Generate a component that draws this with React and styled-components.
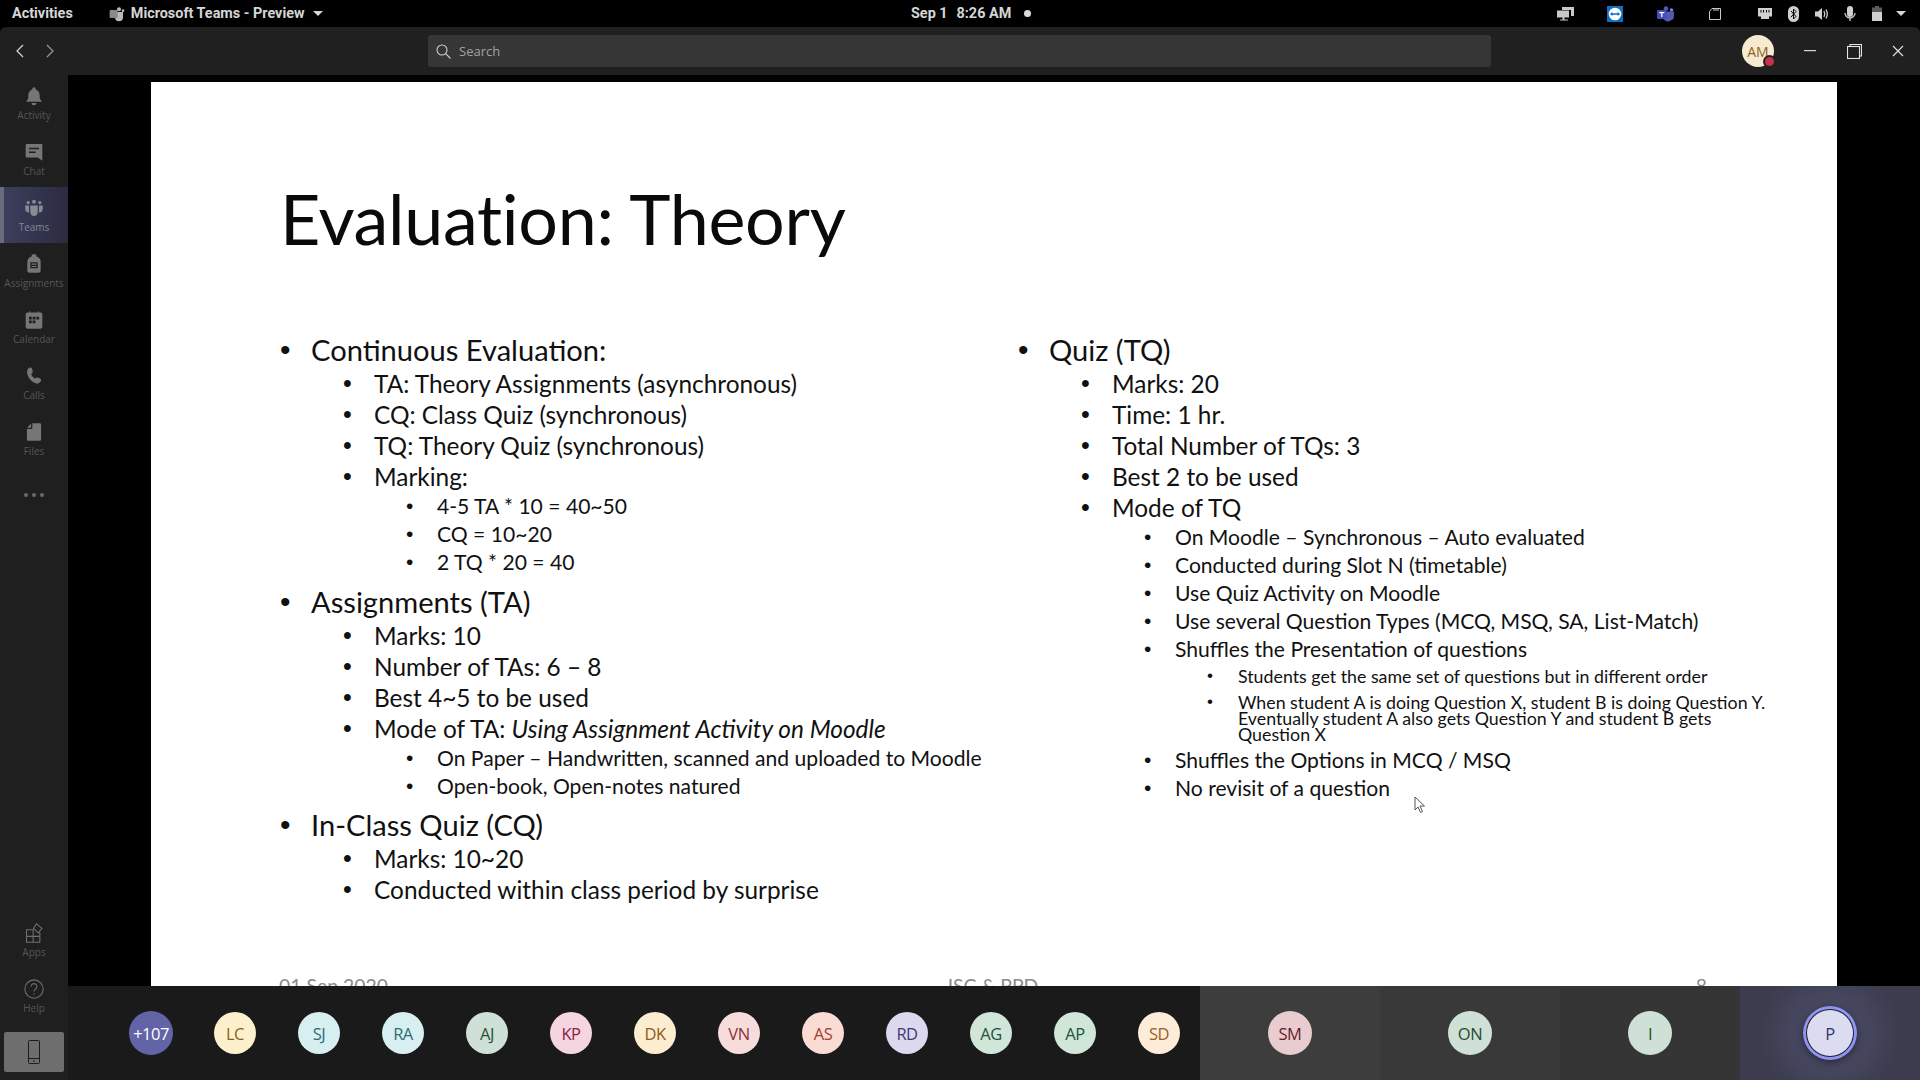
import React from "react";
import styled, { createGlobalStyle } from "styled-components";

const GlobalStyle = createGlobalStyle`
  html, body { margin: 0; padding: 0; background: #000; }
  * { box-sizing: border-box; }
`;

const Page = styled.div`
  width: 1920px;
  height: 1080px;
  display: flex;
  flex-direction: column;
  overflow: hidden;
  background: #000;
`;

// gnome top bar
const TopBar = styled.div`
  height: 27px;
  flex: none;
  display: grid;
  grid-template-columns: 911px auto 1fr;
  align-items: center;
  background: #000;
  color: #d6d6d6;
  font: 700 14.4px "Roboto", sans-serif;
`;

const TopLeft = styled.div`
  display: flex;
  align-items: center;
  padding-left: 12px;
`;

const AppName = styled.div`
  display: flex;
  align-items: center;
  gap: 6px;
  margin-left: 36px;
`;

const Caret = styled.span`
  width: 0;
  height: 0;
  margin-left: 2px;
  border-left: 5px solid transparent;
  border-right: 5px solid transparent;
  border-top: 5px solid #d6d6d6;
`;

const Clock = styled.div`
  display: flex;
  align-items: center;
  gap: 9px;
`;

const RecDot = styled.span`
  width: 7px;
  height: 7px;
  margin-left: 4px;
  border-radius: 50%;
  background: #dcdcdc;
`;

const Tray = styled.div`
  height: 27px;
  display: flex;
  align-items: center;
  justify-content: flex-end;
  padding-right: 10px;
`;

const TraySlot = styled.span`
  width: ${(p) => p.$w}px;
  display: flex;
  justify-content: center;
`;

// teams title bar
const TitleBar = styled.div`
  height: 48px;
  flex: none;
  display: grid;
  grid-template-columns: 428px 1063px 1fr;
  align-items: center;
  background: #202020;
  border-radius: 6px 6px 0 0;
`;

const NavArrows = styled.div`
  display: flex;
  align-items: center;
  gap: 18px;
  padding-left: 14px;
`;

const SearchBox = styled.div`
  height: 32px;
  display: flex;
  align-items: center;
  gap: 8px;
  padding-left: 8px;
  background: #363636;
  border-radius: 3px;
  color: #a2a2a2;
  font: 13px "Open Sans", sans-serif;
`;

const TitleRight = styled.div`
  display: flex;
  align-items: center;
  padding-left: 251px;
`;

const MeAvatar = styled.div`
  position: relative;
  width: 32px;
  height: 32px;
  display: flex;
  align-items: center;
  justify-content: center;
  border-radius: 50%;
  background: #f6ead0;
  color: #8a6420;
  font: 14px "Open Sans", sans-serif;
`;

const Presence = styled.span`
  position: absolute;
  right: -2px;
  bottom: -1px;
  width: 13px;
  height: 13px;
  border-radius: 50%;
  border: 2px solid #202020;
  background: #c4314b;
`;

const WinButtons = styled.div`
  display: flex;
  align-items: center;
  margin-left: 14px;
`;

const WinButton = styled.span`
  width: 44px;
  display: flex;
  justify-content: center;
`;

const Body = styled.div`
  flex: 1;
  min-height: 0;
  display: flex;
`;

const Sidebar = styled.nav`
  width: 68px;
  flex: none;
  display: flex;
  flex-direction: column;
  background: #1f1f1f;
`;

const NavItem = styled.div`
  height: 56px;
  flex: none;
  display: flex;
  flex-direction: column;
  align-items: center;
  padding-top: 11px;
  gap: 2px;
  color: #767676;
  border-left: 4px solid ${(p) => (p.$active ? "#6b6b80" : "transparent")};
  padding-right: 4px;
  background: ${(p) => (p.$active ? "linear-gradient(90deg, #3c3e5c, #2b2c40)" : "none")};
`;

const NavLabel = styled.span`
  font: 10px/14px "Open Sans", sans-serif;
  color: ${(p) => (p.$active ? "#86868f" : "#565656")};
  white-space: nowrap;
`;

const MoreDots = styled.div`
  height: 56px;
  flex: none;
  display: flex;
  align-items: center;
  justify-content: center;
  gap: 4px;
`;

const Dot = styled.span`
  width: 4px;
  height: 4px;
  border-radius: 50%;
  background: #6a6a6a;
`;

const SidebarBottom = styled.div`
  margin-top: auto;
  display: flex;
  flex-direction: column;
  padding-bottom: 8px;
`;

const PhoneButton = styled.div`
  height: 40px;
  margin: 8px 4px 0;
  display: flex;
  align-items: center;
  justify-content: center;
  border-radius: 2px;
  background: #6e6e6e;
`;

const MainColumn = styled.div`
  flex: 1;
  min-width: 0;
  display: flex;
  flex-direction: column;
`;

const Stage = styled.div`
  flex: 1;
  min-height: 0;
  overflow: hidden;
  background: #000;
  padding: 7px 83px 0;
`;

const Slide = styled.section`
  position: relative;
  height: 948px;
  display: flex;
  flex-direction: column;
  padding: 96px 40px 0 129px;
  background: #fff;
  color: #111;
  font-family: "Lato", sans-serif;
`;

const SlideTitle = styled.h1`
  margin: 0 0 74px;
  font-size: 70px;
  font-weight: 400;
  line-height: 80px;
  letter-spacing: -0.3px;
  color: #0a0a0a;
`;

const Columns = styled.div`
  display: grid;
  grid-template-columns: 738px 1fr;
`;

const levelSpec = {
  1: { size: 29.1, line: 36, indent: 0, dot: 30 },
  2: { size: 24.4, line: 31, indent: 63, dot: 25 },
  3: { size: 21.1, line: 28, indent: 126, dot: 21 },
  4: { size: 17.8, line: 16, indent: 189, dot: 17 },
};

const Item = styled.div`
  display: grid;
  grid-template-columns: 31px 1fr;
  padding-left: ${(p) => levelSpec[p.$level].indent}px;
  font-size: ${(p) => levelSpec[p.$level].size}px;
  line-height: ${(p) => levelSpec[p.$level].line}px;
  padding-top: ${(p) => (p.$level === 4 ? 5 : 0)}px;
  padding-bottom: ${(p) => (p.$level === 4 ? 4.5 : 0)}px;
  margin-top: ${(p) => (p.$gap ? 7.5 : 0)}px;
  white-space: pre-line;
`;

const Bullet = styled.span`
  font-family: "Liberation Sans", sans-serif;
  font-size: ${(p) => levelSpec[p.$level].dot}px;
`;

const SlideFooter = styled.div`
  position: absolute;
  left: 128px;
  right: 130px;
  top: 892px;
  display: grid;
  grid-template-columns: 1fr auto 1fr;
  color: #8a8a8a;
  font-size: 19.4px;
`;

const FooterNumber = styled.span`
  text-align: right;
`;

const CursorMark = styled.svg`
  position: absolute;
  left: 1263px;
  top: 714px;
`;

const BottomBar = styled.div`
  height: 94px;
  flex: none;
  display: flex;
  background: #1a1a1a;
`;

const Gallery = styled.div`
  flex: 1;
  min-width: 0;
  display: flex;
  align-items: center;
  padding-left: 41px;
`;

const GallerySlot = styled.div`
  width: 84px;
  flex: none;
  display: flex;
  justify-content: center;
`;

const Tile = styled.div`
  width: 180px;
  flex: none;
  display: flex;
  align-items: center;
  justify-content: center;
  background: ${(p) => p.$bg};
`;

const SelfTile = styled(Tile)`
  background: radial-gradient(circle at 50% 50%, #555679 0, #46465f 35%, #3c3c4e 70%);
`;

const Avatar = styled.div`
  width: ${(p) => p.$size}px;
  height: ${(p) => p.$size}px;
  display: flex;
  align-items: center;
  justify-content: center;
  border-radius: 50%;
  background: ${(p) => p.$bg};
  color: ${(p) => p.$fg};
  font: 500 16.5px "Open Sans", sans-serif;
  letter-spacing: -0.5px;
`;

const SpeakerRing = styled.div`
  width: 54px;
  height: 54px;
  display: flex;
  align-items: center;
  justify-content: center;
  border-radius: 50%;
  background: #1d1d2c;
  box-shadow: inset 0 0 0 3px #8f93f2, 0 2px 8px rgba(0, 0, 0, 0.5);
`;

const Icon = ({ children, size = 20, color = "#767676", box = 24 }) => (
  <svg width={size} height={size} viewBox={`0 0 ${box} ${box}`} fill={color}>
    {children}
  </svg>
);

const navItems = [
  {
    label: "Activity",
    icon: (
      <Icon>
        <path d="M12 1.5a2 2 0 0 1 2 2v.6c3 1 4.8 3.6 4.8 7v3.6l2.7 4.3h-19l2.7-4.3v-3.6c0-3.4 1.8-6 4.8-7v-.6a2 2 0 0 1 2-2zM9 20.500h6a3 2.700 0 0 1-6 0z" />
      </Icon>
    ),
  },
  {
    label: "Chat",
    icon: (
      <Icon>
        <path d="M3 2.500h18a1 1 0 0 1 1 1v19l-5.500-4H3a1 1 0 0 1-1-1v-14a1 1 0 0 1 1-1z" />
        <path d="M6 7h12v1.800H6zM6 11.500h8v1.800H6z" fill="#1f1f1f" />
      </Icon>
    ),
  },
  {
    label: "Teams",
    active: true,
    icon: (
      <Icon color="#8a8a96">
        <circle cx="12" cy="4.500" r="2.300" />
        <circle cx="5" cy="5.500" r="1.900" />
        <circle cx="19" cy="5.500" r="1.900" />
        <path d="M7.500 9h9v7.500a4.500 5 0 0 1-9 0zM1.500 9h4.500v6.500q0 1.200.3 2C3 17.500 1.500 15.500 1.500 13zM18 9h4.500v4c0 2.500-1.500 4.500-4.800 4.500q.3-.8.3-2z" />
      </Icon>
    ),
  },
  {
    label: "Assignments",
    icon: (
      <Icon>
        <path d="M9 3a3 3 0 0 1 6 0c3 .8 5 3.200 5 6.500V20a2.500 2.500 0 0 1-2.500 2.500h-11A2.500 2.500 0 0 1 4 20V9.500C4 6.200 6 3.800 9 3z" />
        <path d="M7.500 10h9v7h-9zM9 11.500v1.500h6v-1.500zM9 14.300v1.300h6v-1.300z" fill="#1f1f1f" fillRule="evenodd" />
      </Icon>
    ),
  },
  {
    label: "Calendar",
    icon: (
      <Icon>
        <path d="M5 3h1.500V1.500h1V3h9V1.500h1V3H20a2 2 0 0 1 2 2v15a2.500 2.500 0 0 1-2.500 2.500h-15A2.500 2.500 0 0 1 2 20V5a2 2 0 0 1 2-2z" />
        <path d="M6 8h3.300v3.300H6zM10.400 8h3.300v3.300h-3.300zM14.800 8h3.300v3.300h-3.300zM6 12.600h3.300v3.300H6zM10.400 12.600h3.300v3.300h-3.300z" fill="#1f1f1f" />
      </Icon>
    ),
  },
  {
    label: "Calls",
    icon: (
      <Icon>
        <path d="M6.500 2c1.800-.6 3 .2 3.400 2l.5 2.300c.3 1.300-.2 2.200-1.300 3-.4.3-.4.7-.2 1.200.8 1.800 2 3.200 3.700 4.200.5.300.9.200 1.200-.1 1-1 2.100-1.200 3.300-.6l2 1c1.500.8 1.800 2.200.8 3.700-1.400 2.200-3.600 3-6 2-5-2-8.800-6.300-10-11.800C3 6 4 3.300 6.500 2z" />
      </Icon>
    ),
  },
  {
    label: "Files",
    icon: (
      <Icon>
        <path d="M10 1.500h9a1.500 1.500 0 0 1 1.500 1.500v18a1.500 1.500 0 0 1-1.500 1.500H5A1.500 1.500 0 0 1 3.500 21V8.500H9a1 1 0 0 0 1-1z" />
        <path d="M8.500 1.800v5.200H3.800z" />
      </Icon>
    ),
  },
];

const Outline = ({ children }) => (
  <svg width="20" height="20" viewBox="0 0 24 24" fill="none" stroke="#6f6f6f" strokeWidth="1.300">
    {children}
  </svg>
);

const leftColumn = [
  [1, "Continuous Evaluation:"],
  [2, "TA: Theory Assignments (asynchronous)"],
  [2, "CQ: Class Quiz (synchronous)"],
  [2, "TQ: Theory Quiz (synchronous)"],
  [2, "Marking:"],
  [3, "4-5 TA * 10 = 40~50"],
  [3, "CQ = 10~20"],
  [3, "2 TQ * 20 = 40"],
  [1, "Assignments (TA)", true],
  [2, "Marks: 10"],
  [2, "Number of TAs: 6 – 8"],
  [2, "Best 4~5 to be used"],
  [2, <>Mode of TA: <i>Using Assignment Activity on Moodle</i></>],
  [3, "On Paper – Handwritten, scanned and uploaded to Moodle"],
  [3, "Open-book, Open-notes natured"],
  [1, "In-Class Quiz (CQ)", true],
  [2, "Marks: 10~20"],
  [2, "Conducted within class period by surprise"],
];

const rightColumn = [
  [1, "Quiz (TQ)"],
  [2, "Marks: 20"],
  [2, "Time: 1 hr."],
  [2, "Total Number of TQs: 3"],
  [2, "Best 2 to be used"],
  [2, "Mode of TQ"],
  [3, "On Moodle – Synchronous – Auto evaluated"],
  [3, "Conducted during Slot N (timetable)"],
  [3, "Use Quiz Activity on Moodle"],
  [3, "Use several Question Types (MCQ, MSQ, SA, List-Match)"],
  [3, "Shuffles the Presentation of questions"],
  [4, "Students get the same set of questions but in different order"],
  [4, "When student A is doing Question X, student B is doing Question Y.\nEventually student A also gets Question Y and student B gets\nQuestion X"],
  [3, "Shuffles the Options in MCQ / MSQ"],
  [3, "No revisit of a question"],
];

const people = [
  ["LC", "#fdf0cd", "#8a6116"],
  ["SJ", "#d8eff2", "#2f6d75"],
  ["RA", "#d8eff2", "#2f6d75"],
  ["AJ", "#cfe0d6", "#23533a"],
  ["KP", "#f5d5e0", "#8a2048"],
  ["DK", "#fcecd0", "#8e5a1a"],
  ["VN", "#f7dcdc", "#8d3030"],
  ["AS", "#fbdcd5", "#a04030"],
  ["RD", "#dcd8ee", "#3d3a75"],
  ["AG", "#cfe6d8", "#23533a"],
  ["AP", "#cfe6d8", "#23533a"],
  ["SD", "#fdecd8", "#96601f"],
];

const renderList = (rows) =>
  rows.map(([level, text, gap], i) => (
    <Item key={i} $level={level} $gap={gap}>
      <Bullet $level={level}>•</Bullet>
      <span>{text}</span>
    </Item>
  ));

export default function App() {
  return (
    <Page>
      <GlobalStyle />
      <TopBar>
        <TopLeft>
          Activities
          <AppName>
            <svg width="16" height="16" viewBox="0 0 24 24" fill="#b9b9b9">
              <circle cx="15" cy="5" r="3" />
              <circle cx="21" cy="7" r="2" />
              <path d="M9 9h12v8a6 6 0 0 1-12 0z" />
              <rect x="1" y="6" width="12" height="12" rx="1" fill="#8a8a8a" />
            </svg>
            Microsoft Teams - Preview
            <Caret />
          </AppName>
        </TopLeft>
        <Clock>
          <span>Sep 1</span>
          <span>8:26 AM</span>
          <RecDot />
        </Clock>
        <Tray>
          <TraySlot $w={26}>
            <svg width="17" height="14" viewBox="0 0 17 14" fill="#c8c8c8">
              <path d="M5 0h12v9h-3V3H5zM0 3.500h12v7H7.500v2H11v1H3v-1h2.500v-2H0z" />
            </svg>
          </TraySlot>
          <TraySlot $w={74}>
            <svg width="16" height="16" viewBox="0 0 16 16">
              <rect width="16" height="16" fill="#0e6fc6" />
              <circle cx="8" cy="8" r="6.300" fill="#fff" />
              <path d="M2.800 8l2.700-2v1.300h5V6l2.700 2-2.700 2V8.700h-5V10z" fill="#0e6fc6" />
            </svg>
          </TraySlot>
          <TraySlot $w={26}>
            <svg width="17" height="16" viewBox="0 0 17 16" fill="#5558af">
              <circle cx="9" cy="2.500" r="2.300" />
              <circle cx="14.500" cy="4" r="1.700" fill="#7b83eb" />
              <path d="M6 5.500h11v5a4 4 0 0 1-3 3.800A5 5 0 0 1 6 12z" />
              <rect y="4" width="9.500" height="9" rx="1" fill="#464eb8" />
              <path d="M2.300 6h5v1.200H5.400V11H4.200V7.200H2.300z" fill="#fff" />
            </svg>
          </TraySlot>
          <TraySlot $w={74}>
            <svg width="12" height="12" viewBox="0 0 12 12" fill="none" stroke="#c8c8c8">
              <path d="M.5 3.500L3 .5h8.500v11H.5zM5 1v2M7 1v2M9 1v2" />
            </svg>
          </TraySlot>
          <TraySlot $w={26}>
            <svg width="14" height="11" viewBox="0 0 14 11" fill="#d0d0d0">
              <path d="M0 0h14v8.500h-3V11H3V8.500H0zM2.500 2v2.500h1V2zM5 2v2.500h1V2zM8 2v2.500h1V2zM10.500 2v2.500h1V2z" fillRule="evenodd" />
            </svg>
          </TraySlot>
          <TraySlot $w={30}>
            <svg width="11" height="16" viewBox="0 0 11 16">
              <rect width="11" height="16" rx="5.500" fill="#d0d0d0" />
              <path d="M3 5l5 5.500-2.500 2.500V3L8 5.500 3 11" fill="none" stroke="#000" />
            </svg>
          </TraySlot>
          <TraySlot $w={28}>
            <svg width="15" height="14" viewBox="0 0 15 14" fill="#d0d0d0">
              <path d="M0 4.500h3L7 1v12L3 9.500H0z" />
              <path d="M9 4q1.500 3 0 6M11 2.500q2.500 4.500 0 9" fill="none" stroke="#d0d0d0" strokeWidth="1.300" />
            </svg>
          </TraySlot>
          <TraySlot $w={28}>
            <svg width="12" height="16" viewBox="0 0 12 16" fill="#d0d0d0">
              <rect x="3" width="6" height="11" rx="3" />
              <path d="M1 7a5 5 0 0 0 10 0M6 12v3" fill="none" stroke="#d0d0d0" strokeWidth="1.300" />
            </svg>
          </TraySlot>
          <TraySlot $w={26}>
            <svg width="10" height="15" viewBox="0 0 10 15">
              <path d="M3 0h4v1.500h3V15H0V1.500h3z" fill="#5c5c5c" />
              <path d="M0 6h10v9H0z" fill="#d0d0d0" />
            </svg>
          </TraySlot>
          <TraySlot $w={20}>
            <Caret />
          </TraySlot>
        </Tray>
      </TopBar>

      <TitleBar>
        <NavArrows>
          <svg width="12" height="14" viewBox="0 0 12 14" fill="none" stroke="#d8d8d8" strokeWidth="1.200">
            <path d="M9 1L3 7l6 6" />
          </svg>
          <svg width="12" height="14" viewBox="0 0 12 14" fill="none" stroke="#9a9a9a" strokeWidth="1.200">
            <path d="M3 1l6 6-6 6" />
          </svg>
        </NavArrows>
        <SearchBox>
          <svg width="15" height="15" viewBox="0 0 15 15" fill="none" stroke="#d0d0d0" strokeWidth="1.100">
            <circle cx="6" cy="6" r="5" />
            <path d="M9.700 9.700l4.800 4.800" />
          </svg>
          Search
        </SearchBox>
        <TitleRight>
          <MeAvatar>
            AM
            <Presence />
          </MeAvatar>
          <WinButtons>
            <WinButton>
              <svg width="12" height="2" viewBox="0 0 12 2" fill="#d8d8d8">
                <rect width="12" height="1.200" />
              </svg>
            </WinButton>
            <WinButton>
              <svg width="15" height="15" viewBox="0 0 15 15" fill="none" stroke="#e4e4e4" strokeWidth="1.100">
                <rect x=".5" y="2.500" width="12" height="12" />
                <path d="M3 2.500V.5h11.500V12h-2" />
              </svg>
            </WinButton>
            <WinButton>
              <svg width="12" height="12" viewBox="0 0 12 12" stroke="#e4e4e4" strokeWidth="1.100">
                <path d="M1 1l10 10M11 1L1 11" />
              </svg>
            </WinButton>
          </WinButtons>
        </TitleRight>
      </TitleBar>

      <Body>
        <Sidebar>
          {navItems.map((n) => (
            <NavItem key={n.label} $active={n.active}>
              {n.icon}
              <NavLabel $active={n.active}>{n.label}</NavLabel>
            </NavItem>
          ))}
          <MoreDots>
            <Dot />
            <Dot />
            <Dot />
          </MoreDots>
          <SidebarBottom>
            <NavItem>
              <Outline>
                <path d="M3 8h8v8H3zM3 16h8v7H3zM11 16h8v7h-8zM11 8v8h8v-5M15 1l6.500 5.500L17 12l-5.500-5.500z" />
              </Outline>
              <NavLabel>Apps</NavLabel>
            </NavItem>
            <NavItem>
              <Outline>
                <circle cx="12" cy="12" r="11" />
                <path d="M8.500 9a3.500 3.500 0 1 1 5.500 3c-1.300.9-2 1.500-2 3M12 17v2" />
              </Outline>
              <NavLabel>Help</NavLabel>
            </NavItem>
            <PhoneButton>
              <svg width="12" height="24" viewBox="0 0 12 24" fill="none" stroke="#1c1c1c" strokeWidth="1">
                <rect x=".5" y=".5" width="11" height="23" rx="1" />
                <path d="M.5 18.500h11M5 21h2" />
              </svg>
            </PhoneButton>
          </SidebarBottom>
        </Sidebar>

        <MainColumn>
          <Stage>
            <Slide>
              <SlideTitle>Evaluation: Theory</SlideTitle>
              <Columns>
                <div>{renderList(leftColumn)}</div>
                <div>{renderList(rightColumn)}</div>
              </Columns>
              <SlideFooter>
                <span>01 Sep 2020</span>
                <span>ISC &amp; PPD</span>
                <FooterNumber>8</FooterNumber>
              </SlideFooter>
              <CursorMark width="12" height="18" viewBox="0 0 12 18">
                <path d="M1 1v13l3-3 2.500 5.500 2-1L6 10h4.500z" fill="#fff" stroke="#555" strokeWidth="1" />
              </CursorMark>
            </Slide>
          </Stage>
          <BottomBar>
            <Gallery>
              <GallerySlot>
                <Avatar $size={44} $bg="#6264a7" $fg="#fff">+107</Avatar>
              </GallerySlot>
              {people.map(([name, bg, fg]) => (
                <GallerySlot key={name}>
                  <Avatar $size={42} $bg={bg} $fg={fg}>{name}</Avatar>
                </GallerySlot>
              ))}
            </Gallery>
            <Tile $bg="#3d3d3d">
              <Avatar $size={44} $bg="#e8ccd0" $fg="#6a1c26">SM</Avatar>
            </Tile>
            <Tile $bg="#393939">
              <Avatar $size={44} $bg="#cfe0d6" $fg="#1c4a33">ON</Avatar>
            </Tile>
            <Tile $bg="#353535">
              <Avatar $size={44} $bg="#cfe0d6" $fg="#1c4a33">I</Avatar>
            </Tile>
            <SelfTile>
              <SpeakerRing>
                <Avatar $size={46} $bg="#dcdcf0" $fg="#33346b">P</Avatar>
              </SpeakerRing>
            </SelfTile>
          </BottomBar>
        </MainColumn>
      </Body>
    </Page>
  );
}
